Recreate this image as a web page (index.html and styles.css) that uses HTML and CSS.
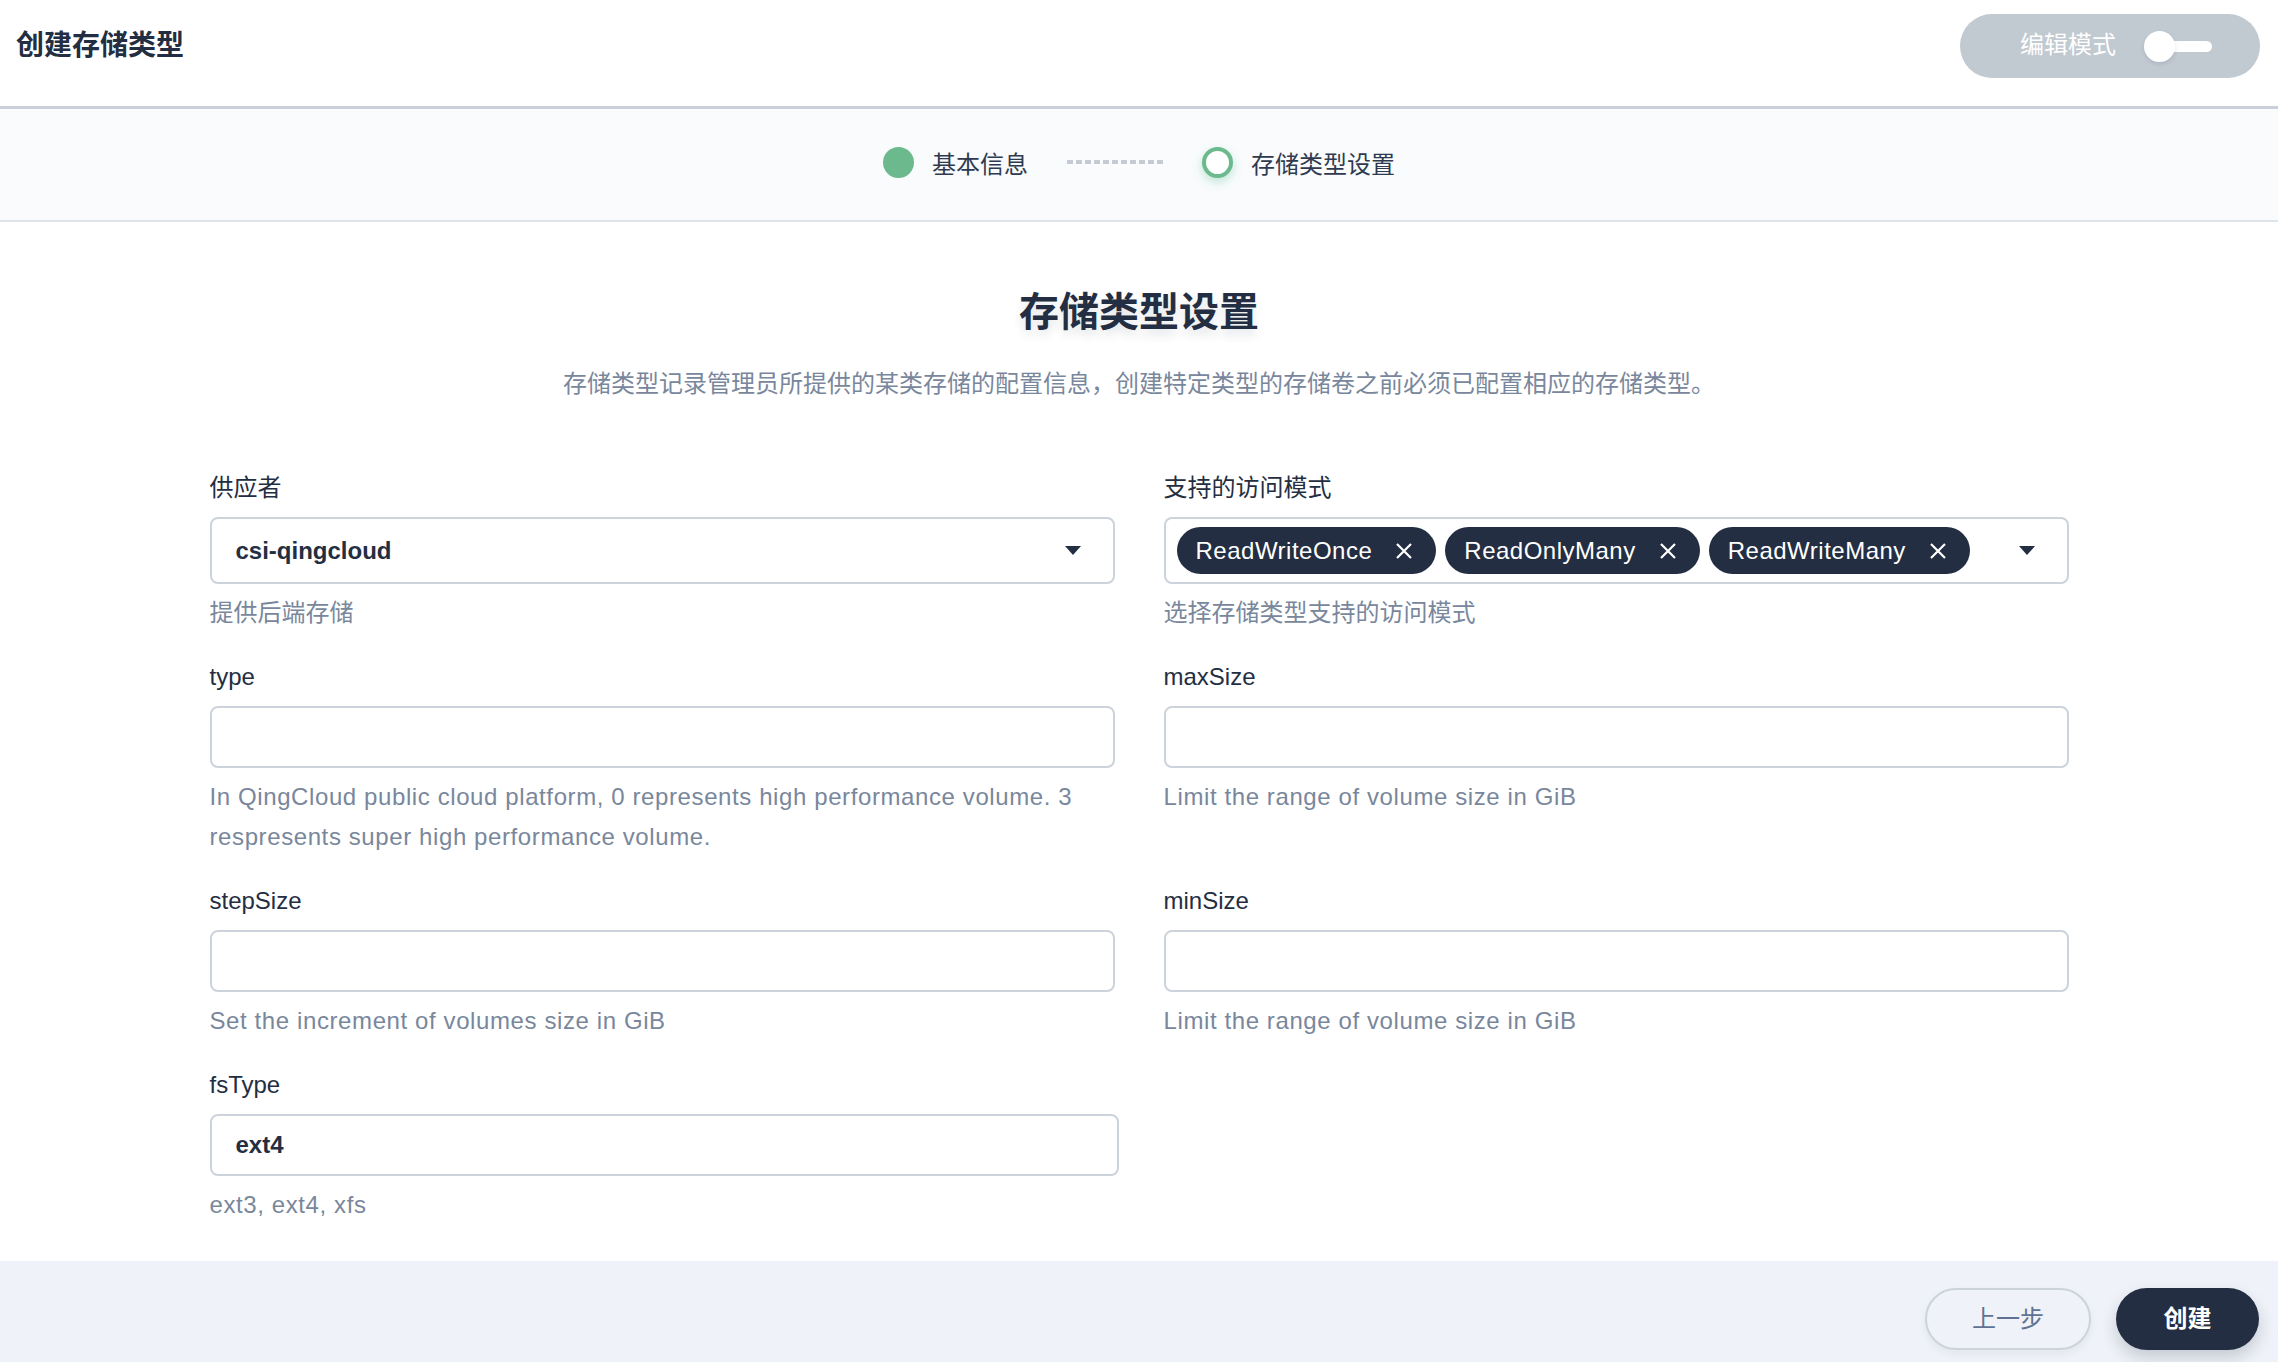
FILE: index.html
```html
<!DOCTYPE html>
<html lang="zh-CN">
<head>
<meta charset="utf-8">
<title>创建存储类型</title>
<link rel="stylesheet" href="styles.css">
</head>
<body>
<header class="topbar">
  <h1 class="page-title">创建存储类型</h1>
  <div class="mode-toggle">
    <span class="mode-text">编辑模式</span>
    <span class="switch"><span class="track"></span><span class="knob"></span></span>
  </div>
</header>

<nav class="steps">
  <div class="step"><span class="step-dot"></span><span>基本信息</span></div>
  <span class="step-line"></span>
  <div class="step"><span class="step-dot current"></span><span>存储类型设置</span></div>
</nav>

<main class="content">
  <h2 class="section-title">存储类型设置</h2>
  <p class="section-desc">存储类型记录管理员所提供的某类存储的配置信息，创建特定类型的存储卷之前必须已配置相应的存储类型。</p>

  <div class="form-grid">
    <div class="field">
      <div class="label">供应者</div>
      <div class="control select">
        <span>csi-qingcloud</span>
        <svg class="caret" width="16" height="9" viewBox="0 0 16 9"><path d="M0 0H16L8 9Z" fill="#242e42"/></svg>
      </div>
      <div class="hint">提供后端存储</div>
    </div>
    <div class="field">
      <div class="label">支持的访问模式</div>
      <div class="control multi">
        <span class="tag">ReadWriteOnce<svg width="16" height="16" viewBox="0 0 16 16"><path d="M1 1L15 15M15 1L1 15" stroke="#fff" stroke-width="2.2"/></svg></span>
        <span class="tag">ReadOnlyMany<svg width="16" height="16" viewBox="0 0 16 16"><path d="M1 1L15 15M15 1L1 15" stroke="#fff" stroke-width="2.2"/></svg></span>
        <span class="tag">ReadWriteMany<svg width="16" height="16" viewBox="0 0 16 16"><path d="M1 1L15 15M15 1L1 15" stroke="#fff" stroke-width="2.2"/></svg></span>
        <svg class="caret multi-caret" width="16" height="9" viewBox="0 0 16 9"><path d="M0 0H16L8 9Z" fill="#242e42"/></svg>
      </div>
      <div class="hint">选择存储类型支持的访问模式</div>
    </div>

    <div class="field">
      <div class="label">type</div>
      <input class="control" type="text" value="">
      <div class="hint latin">In QingCloud public cloud platform, 0 represents high performance volume. 3 respresents super high performance volume.</div>
    </div>
    <div class="field">
      <div class="label">maxSize</div>
      <input class="control" type="text" value="">
      <div class="hint latin">Limit the range of volume size in GiB</div>
    </div>

    <div class="field">
      <div class="label">stepSize</div>
      <input class="control" type="text" value="">
      <div class="hint latin">Set the increment of volumes size in GiB</div>
    </div>
    <div class="field">
      <div class="label">minSize</div>
      <input class="control" type="text" value="">
      <div class="hint latin">Limit the range of volume size in GiB</div>
    </div>

    <div class="field">
      <div class="label">fsType</div>
      <input class="control wide" type="text" value="ext4">
      <div class="hint latin">ext3, ext4, xfs</div>
    </div>
  </div>
</main>

<footer class="footer">
  <button class="btn btn-secondary" type="button">上一步</button>
  <button class="btn btn-primary" type="button">创建</button>
</footer>
</body>
</html>
```

FILE: styles.css
```css
* {
  box-sizing: border-box;
}

body {
  margin: 0;
  font-family: "Liberation Sans", "Noto Sans CJK SC", sans-serif;
  color: #242e42;
  background: #ffffff;
}

/* ---------- top bar ---------- */
.topbar {
  height: 109px;
  border-bottom: 3px solid #c9d0da;
  display: flex;
  justify-content: space-between;
  align-items: flex-start;
  padding: 14px 18px 0 16px;
}

.page-title {
  margin: 0;
  font-size: 28px;
  line-height: 64px;
  font-weight: 700;
  color: #242e42;
}

.mode-toggle {
  width: 300px;
  height: 64px;
  border-radius: 32px;
  background: #c1c9d1;
  display: flex;
  align-items: center;
  padding-left: 60px;
  color: #ffffff;
  font-size: 24px;
}

.mode-text {
  line-height: 30px;
  margin-top: -2px;
}

.switch {
  position: relative;
  width: 68px;
  height: 31px;
  margin-left: 28px;
}

.track {
  position: absolute;
  left: 16px;
  top: 10px;
  width: 52px;
  height: 11px;
  border-radius: 6px;
  background: #ffffff;
}

.knob {
  position: absolute;
  left: 0;
  top: 0;
  width: 31px;
  height: 31px;
  border-radius: 50%;
  background: #ffffff;
  box-shadow: 0 2px 4px rgba(36, 46, 66, 0.12);
}

/* ---------- steps ---------- */
.steps {
  height: 113px;
  padding-bottom: 5px;
  background: #f9fbfd;
  border-bottom: 2px solid #dfe4ec;
  display: flex;
  justify-content: center;
  align-items: center;
}

.step {
  display: flex;
  align-items: center;
  gap: 18px;
  font-size: 24px;
  color: #2f3a50;
}

.step-dot {
  width: 31px;
  height: 31px;
  border-radius: 50%;
  background: #6cb98e;
}

.step-dot.current {
  background: #ffffff;
  border: 4px solid #6cb98e;
  box-shadow: 0 4px 10px rgba(85, 188, 138, 0.35);
}

.step-line {
  width: 96px;
  height: 4px;
  margin: 0 39px;
  background: repeating-linear-gradient(90deg, #c4cbd4 0 6px, transparent 6px 9px);
}

/* ---------- content ---------- */
.content {
  padding: 62px 0 36px;
}

.section-title {
  margin: 0;
  text-align: center;
  font-size: 40px;
  line-height: 56px;
  font-weight: 700;
  color: #242e42;
  text-shadow: 0 6px 10px rgba(36, 46, 66, 0.12);
}

.section-desc {
  margin: 26px 0 0;
  text-align: center;
  font-size: 24px;
  line-height: 36px;
  color: #79879c;
}

.form-grid {
  width: 1859px;
  margin: 69px auto 0;
  display: grid;
  grid-template-columns: 905px 905px;
  column-gap: 49px;
  row-gap: 27px;
  align-items: start;
}

.label {
  font-size: 24px;
  line-height: 34px;
  margin-bottom: 12px;
  color: #242e42;
}

.control {
  display: flex;
  align-items: center;
  width: 100%;
  height: 62px;
  border: 2px solid #ccd3db;
  border-radius: 8px;
  background: #ffffff;
  padding: 0 24px;
  font-family: inherit;
  font-size: 24px;
  font-weight: 700;
  color: #242e42;
  outline: none;
}

.control.wide {
  width: calc(100% + 4px);
}

.select {
  height: 67px;
  justify-content: space-between;
  padding-right: 32px;
}

.multi {
  height: 67px;
  padding: 0 32px 0 11px;
  gap: 9px;
  font-weight: 400;
}

.multi-caret {
  margin-left: auto;
}

.tag {
  display: flex;
  align-items: center;
  gap: 24px;
  height: 47px;
  border-radius: 24px;
  background: #242e42;
  color: #ffffff;
  padding: 0 24px 0 19px;
  font-size: 24px;
  letter-spacing: 0.5px;
}

.hint {
  margin-top: 9px;
  font-size: 24px;
  line-height: 40px;
  color: #79879c;
}

.hint.latin {
  letter-spacing: 0.6px;
}

/* ---------- footer ---------- */
.footer {
  background: #eff2f8;
  display: flex;
  justify-content: flex-end;
  gap: 25px;
  padding: 27px 19px 27px;
}

.btn {
  height: 62px;
  border-radius: 31px;
  font-family: inherit;
  font-size: 24px;
  padding: 0 0 5px;
  cursor: pointer;
}

.btn-secondary {
  width: 166px;
  border: 2px solid #ccd3db;
  background: #eff2f8;
  color: #5f7292;
  box-shadow: 0 4px 8px rgba(36, 46, 66, 0.06);
}

.btn-primary {
  width: 143px;
  border: none;
  background: #242e42;
  color: #ffffff;
  font-weight: 700;
  box-shadow: 0 8px 16px rgba(36, 46, 66, 0.2);
}
```
